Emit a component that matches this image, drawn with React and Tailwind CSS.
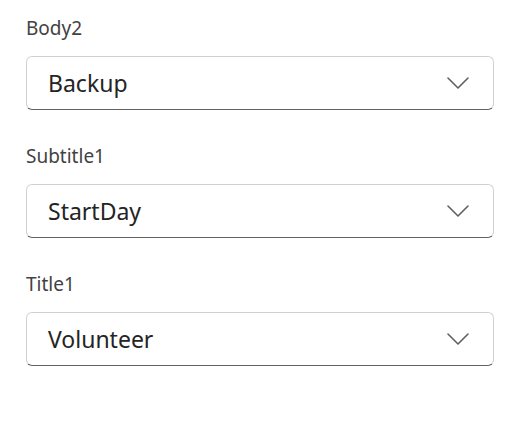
export default function App() {
  const items = [
    { label: "Body2", value: "Backup" },
    { label: "Subtitle1", value: "StartDay" },
    { label: "Title1", value: "Volunteer" },
  ];
  return (
    <div
      className="w-[522px] h-[428px] bg-white pl-[26px] pr-[28px] pt-[16px] flex flex-col gap-[34px]"
      style={{ fontFamily: '"Noto Sans", "Open Sans", sans-serif' }}
    >
      {items.map((it) => (
        <div key={it.label} className="flex flex-col gap-[15px]">
          <div className="text-[19px] leading-[25px] text-[#424242]">{it.label}</div>
          <div className="h-[54px] w-[468px] rounded-[6px] border border-[#d1d1d1] border-b-[#616161] flex items-center justify-between pl-[21px] pr-[24px]">
            <span className="text-[23px] leading-[30px] text-[#242424]">{it.value}</span>
            <svg width="22" height="12" viewBox="0 0 22 12" fill="none">
              <path d="M1 1L11 11L21 1" stroke="#616161" strokeWidth="1.6" strokeLinecap="round" strokeLinejoin="round" />
            </svg>
          </div>
        </div>
      ))}
    </div>
  );
}
